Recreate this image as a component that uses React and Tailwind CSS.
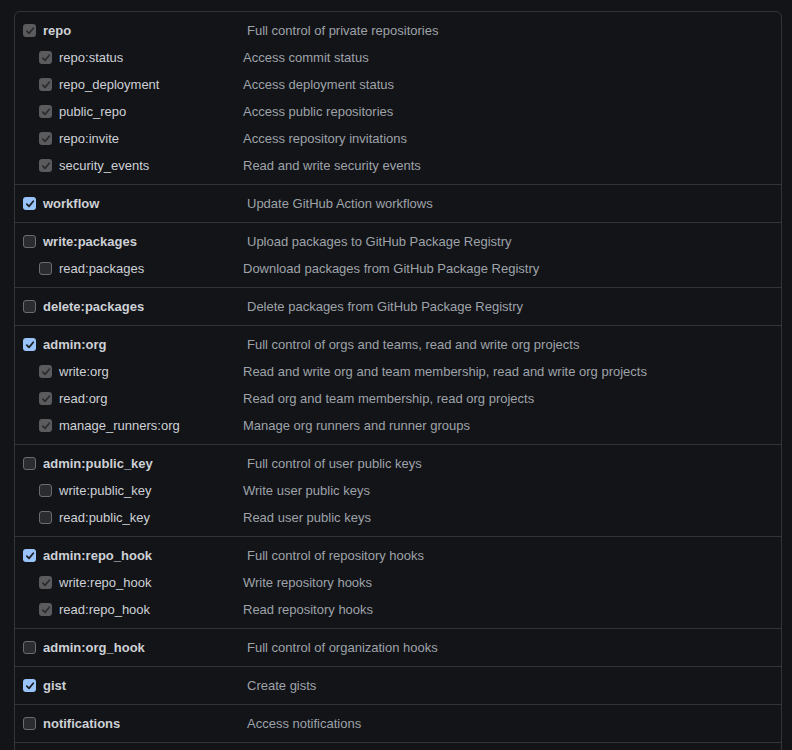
import React from "react";

const groups = [
  [
    { name: "repo", desc: "Full control of private repositories", state: "dis" },
    { name: "repo:status", desc: "Access commit status", state: "dis", sub: true },
    { name: "repo_deployment", desc: "Access deployment status", state: "dis", sub: true },
    { name: "public_repo", desc: "Access public repositories", state: "dis", sub: true },
    { name: "repo:invite", desc: "Access repository invitations", state: "dis", sub: true },
    { name: "security_events", desc: "Read and write security events", state: "dis", sub: true },
  ],
  [{ name: "workflow", desc: "Update GitHub Action workflows", state: "on" }],
  [
    { name: "write:packages", desc: "Upload packages to GitHub Package Registry", state: "off" },
    { name: "read:packages", desc: "Download packages from GitHub Package Registry", state: "off", sub: true },
  ],
  [{ name: "delete:packages", desc: "Delete packages from GitHub Package Registry", state: "off" }],
  [
    { name: "admin:org", desc: "Full control of orgs and teams, read and write org projects", state: "on" },
    { name: "write:org", desc: "Read and write org and team membership, read and write org projects", state: "dis", sub: true },
    { name: "read:org", desc: "Read org and team membership, read org projects", state: "dis", sub: true },
    { name: "manage_runners:org", desc: "Manage org runners and runner groups", state: "dis", sub: true },
  ],
  [
    { name: "admin:public_key", desc: "Full control of user public keys", state: "off" },
    { name: "write:public_key", desc: "Write user public keys", state: "off", sub: true },
    { name: "read:public_key", desc: "Read user public keys", state: "off", sub: true },
  ],
  [
    { name: "admin:repo_hook", desc: "Full control of repository hooks", state: "on" },
    { name: "write:repo_hook", desc: "Write repository hooks", state: "dis", sub: true },
    { name: "read:repo_hook", desc: "Read repository hooks", state: "dis", sub: true },
  ],
  [{ name: "admin:org_hook", desc: "Full control of organization hooks", state: "off" }],
  [{ name: "gist", desc: "Create gists", state: "on" }],
  [{ name: "notifications", desc: "Access notifications", state: "off" }],
];

function Box({ state }) {
  if (state === "off") {
    return <span className="block w-[13px] h-[13px] rounded-[3px] border border-[#6b6c70] bg-[#2b2c30]" />;
  }
  const bg = state === "on" ? "bg-[#99c4fb]" : "bg-[#5b5b5d]";
  const stroke = state === "on" ? "#1c1d21" : "#2c2c2e";
  return (
    <span className={`flex items-center justify-center w-[13px] h-[13px] rounded-[3px] ${bg}`}>
      <svg width="10" height="10" viewBox="0 0 10 10">
        <path d="M1.8 5.2 L4 7.4 L8.3 2.2" fill="none" stroke={stroke} strokeWidth="1.7" strokeLinecap="round" strokeLinejoin="round" />
      </svg>
    </span>
  );
}

function Row({ item }) {
  return (
    <div className="flex items-center h-[27px]">
      <div className={`flex items-center ${item.sub ? "pl-[24px] w-[228px]" : "pl-[8px] w-[232px]"}`}>
        <Box state={item.state} />
        <span className={`ml-[7px] ${item.sub ? "text-[#cdd1d6]" : "font-bold text-[#cdd1d6]"}`}>{item.name}</span>
      </div>
      <span className="text-[#9ea3a9]">{item.desc}</span>
    </div>
  );
}

export default function App() {
  return (
    <div className="h-[750px] bg-[#131418] pt-[11px] px-[14px] overflow-hidden" style={{ fontFamily: "'Liberation Sans', Arial, sans-serif" }}>
      <div className="border border-[#333438] rounded-[6px] text-[13px] w-[768px]">
        {groups.map((g, i) => (
          <div key={i} className={`py-[5px] ${i > 0 ? "border-t border-[#333438]" : ""}`}>
            {g.map((item) => (
              <Row key={item.name} item={item} />
            ))}
          </div>
        ))}
        <div className="h-[30px] border-t border-[#333438]" />
      </div>
    </div>
  );
}
